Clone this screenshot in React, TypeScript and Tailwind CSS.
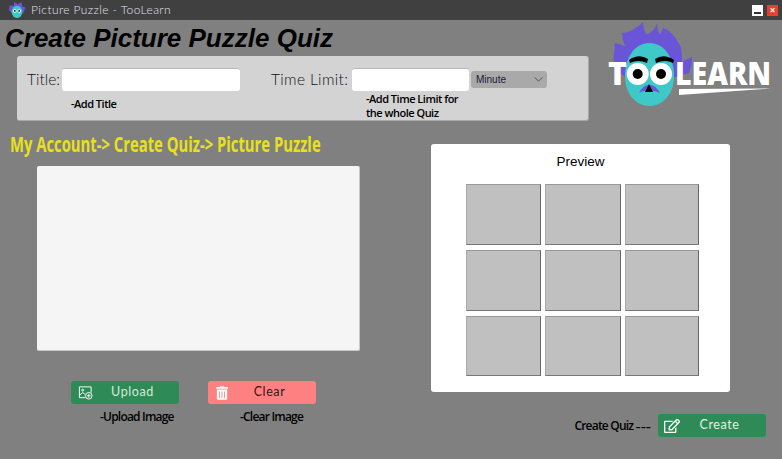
import { FaRegEdit, FaTrashAlt } from "react-icons/fa";

const hint = "font-['Open_Sans',sans-serif] text-[11px] font-semibold tracking-[-0.5px] text-black";
const label = "font-['Lato',sans-serif] text-[15.500px] font-light whitespace-nowrap text-[#111]";
const field = "h-[23px] rounded-[3px] border-t border-[#b8b8c0] bg-white";

function AppIcon() {
  return (
    <svg viewBox="0 0 150 140" className="h-[18px] w-[18px]">
      <path d="M36 100 L6 70 L16 30 L46 36 L52 4 L82 22 L112 6 L120 40 L146 50 L126 100 Z" fill="#6a55d8" />
      <ellipse cx="75" cy="86" rx="44" ry="52" fill="#3fc8c8" />
      <circle cx="57" cy="78" r="15" fill="white" />
      <circle cx="93" cy="78" r="15" fill="white" />
      <circle cx="57" cy="78" r="7" fill="black" />
      <circle cx="93" cy="78" r="7" fill="black" />
    </svg>
  );
}

function Logo() {
  return (
    <svg viewBox="0 20 182 95" className="h-[95px] w-[182px] shrink-0">
      <path
        d="M24 76 C16 70 12 62 14 54 C15 49 14 46 15 43 C19 44 22 45 25 46 C23 41 22 37 22 33 C28 33 36 29 43 22 C43 26 44 30 46 34 C51 34 55 29 57 23 C57 27 58 31 60 35 C61 32 62 30 63 28 C70 30 77 38 81 48 C82 54 82 58 82 62 C85 60 89 58 92 57 C92 63 91 68 89 73 L75 77 Z"
        fill="#6a55d8"
      />
      <path d="M49.500 43 C64 43 74 57 74 76 C74 94 63 106 49.500 106 C36 106 25 94 25 76 C25 57 35 43 49.500 43 Z" fill="#3fc8c8" />
      <path d="M29 60 Q39 53 48 59 L47 63 Q38 59 30 63 Z" fill="black" />
      <path d="M55 59 Q64 53 74 60 L73 63 Q65 59 56 63 Z" fill="black" />
      <circle cx="37.700" cy="74" r="11" fill="white" />
      <circle cx="61" cy="74" r="11" fill="white" />
      <circle cx="37.700" cy="74" r="5" fill="black" />
      <circle cx="61" cy="74" r="5" fill="black" />
      <path d="M39 93 Q44 84 49 85 Q55 84 60 93 Q54 90 49 91 Q44 90 39 93 Z" fill="#6a55d8" />
      <path d="M49 84 L53 92 L45 92 Z" fill="black" />
      <text x="8" y="85" fontFamily="'Open Sans', sans-serif" fontWeight="800" fontSize="32" fill="white">T</text>
      <text x="75" y="85" fontFamily="'Open Sans', sans-serif" fontWeight="800" fontSize="31.500" fill="white" textLength="96" lengthAdjust="spacingAndGlyphs">LEARN</text>
      <path d="M79 89 L171 88.500 L79 95 Z" fill="white" />
    </svg>
  );
}

function UploadIcon() {
  return (
    <svg viewBox="0 0 16 16" className="h-[15px] w-[15px]" fill="none" stroke="white" strokeWidth="1">
      <path d="M8 13.500 H1.500 V2 H14 V8" />
      <circle cx="5" cy="5.500" r="1" />
      <path d="M1.500 11 L5 8 L7.500 10" />
      <circle cx="11.500" cy="11.500" r="3.500" />
      <path d="M11.500 9.500 V13.500 M9.500 11.500 H13.500" />
    </svg>
  );
}

function ActionButton({ text, icon, color, textColor }: { text: string; icon: React.ReactNode; color: string; textColor: string }) {
  return (
    <button type="button" className={`flex h-[23px] w-[108px] items-center rounded-[3px] pl-[5px] ${color}`}>
      <span className="flex w-[18px] justify-center">{icon}</span>
      <span className={`flex-1 pr-[8px] text-center font-['Lato',sans-serif] text-[12.500px] font-normal tracking-[0.6px] ${textColor}`}>{text}</span>
    </button>
  );
}

export default function App() {
  return (
    <div className="flex h-[459px] w-[782px] flex-col overflow-hidden bg-[#808080]">
      <div className="flex h-5 shrink-0 items-center bg-[#404040] pr-[4px] pl-[8px]">
        <AppIcon />
        <span className="ml-[5px] font-['Lato',sans-serif] text-[12px] font-light tracking-[0.4px] text-[#e0e0f0]">Picture Puzzle - TooLearn</span>
        <div className="ml-auto flex gap-[4px]">
          <div className="flex h-[11px] w-[11px] items-end justify-center bg-white pb-[2px]">
            <div className="h-[2px] w-[7px] bg-[#333]" />
          </div>
          <div className="flex h-[11px] w-[11px] items-center justify-center bg-[#e8402f] text-[10px] leading-none font-bold text-white">×</div>
        </div>
      </div>

      <div className="flex h-[101px] shrink-0">
        <div className="w-[600px] shrink-0">
          <h1 className="ml-[5px] h-9 font-['Liberation_Sans',sans-serif] text-[26px] leading-9 font-bold text-black italic">
            Create Picture Puzzle Quiz
          </h1>
          <div className="ml-[17px] flex h-[65px] w-[572px] rounded-[3px] border-r border-b border-[#a8a8a8] bg-[#d3d3d3] pt-3 pl-[10px]">
            <div className="w-[244px]">
              <div className="flex items-center">
                <span className={`${label} w-[35px]`}>Title:</span>
                <div className={`${field} w-[178px]`} />
              </div>
              <p className={`${hint} mt-[5px] ml-[44px]`}>-Add Title</p>
            </div>
            <div>
              <div className="flex items-center">
                <span className={`${label} w-[81px] tracking-[0.35px]`}>Time Limit:</span>
                <div className={`${field} w-[117px]`} />
                <div className="ml-[2px] flex h-[17px] w-[76px] items-center justify-between rounded-[3px] bg-[#a9a9a9] pr-[4px] pl-[5px] font-['Liberation_Sans',sans-serif] text-[10px] text-[#1a1a3a]">
                  Minute
                  <svg viewBox="0 0 10 6" className="h-[5px] w-[9px]" fill="none" stroke="#444" strokeWidth="1">
                    <path d="M0.500 0.500 L5 5 L9.500 0.500" />
                  </svg>
                </div>
              </div>
              <p className={`${hint} mt-[1px] ml-[95px] leading-[14px]`}>
                -Add Time Limit for
                <br />
                the whole Quiz
              </p>
            </div>
          </div>
        </div>
        <Logo />
      </div>

      <div className="flex flex-1">
        <div className="w-[431px] shrink-0">
          <p className="mt-[11px] ml-[10px] h-[34px] origin-left scale-x-[0.705] font-['Open_Sans',sans-serif] text-[21px] leading-6 font-bold whitespace-nowrap text-[#e8e01c]">
            My Account-&gt; Create Quiz-&gt; Picture Puzzle
          </p>
          <div className="ml-[37px] h-[185px] w-[323px] rounded-[2px] border-r border-b border-[#c8c8c8] bg-[#f5f5f5]" />
          <div className="mt-[30px] ml-[71px] flex gap-[29px]">
            <div>
              <ActionButton text="Upload" icon={<UploadIcon />} color="bg-[#2e8b57]" textColor="text-[#d8e8d8]" />
              <p className={`${hint} mt-[4px] ml-[29px] text-[12px] tracking-[-0.8px]`}>-Upload Image</p>
            </div>
            <div>
              <ActionButton text="Clear" icon={<FaTrashAlt className="h-[14px] w-[12px] text-white" />} color="bg-[#ff8080]" textColor="text-[#301818]" />
              <p className={`${hint} mt-[4px] ml-[32px] text-[12px] tracking-[-0.8px]`}>-Clear Image</p>
            </div>
          </div>
        </div>
        <div className="w-[335px]">
          <div className="mt-[23px] h-[248px] w-[299px] rounded-[3px] bg-white pt-[10px]">
            <p className="text-center font-['Liberation_Sans',sans-serif] text-[13.500px] leading-4 text-black">Preview</p>
            <div className="mt-[14px] ml-[35px] grid w-[234px] grid-cols-[75px_76px_74px] grid-rows-[61px_61px_60px] gap-x-[4px] gap-y-[5px]">
              {Array.from({ length: 9 }).map((_, i) => (
                <div key={i} className="border-t border-r border-b border-l border-t-[#999] border-r-[#666] border-b-[#777] border-l-[#aaa] bg-[#c0c0c0]" />
              ))}
            </div>
          </div>
          <div className="mt-[22px] flex items-center justify-end">
            <span className={`${hint} mr-[7px] flex items-center text-[12px] tracking-[-0.8px]`}>
              Create Quiz&nbsp;<span className="text-[16px] leading-none font-normal tracking-[0px]">---</span>
            </span>
            <ActionButton text="Create" icon={<FaRegEdit className="h-[16px] w-[16px] text-white" />} color="bg-[#2e8b57]" textColor="text-[#e8f0e8]" />
          </div>
        </div>
      </div>
    </div>
  );
}
